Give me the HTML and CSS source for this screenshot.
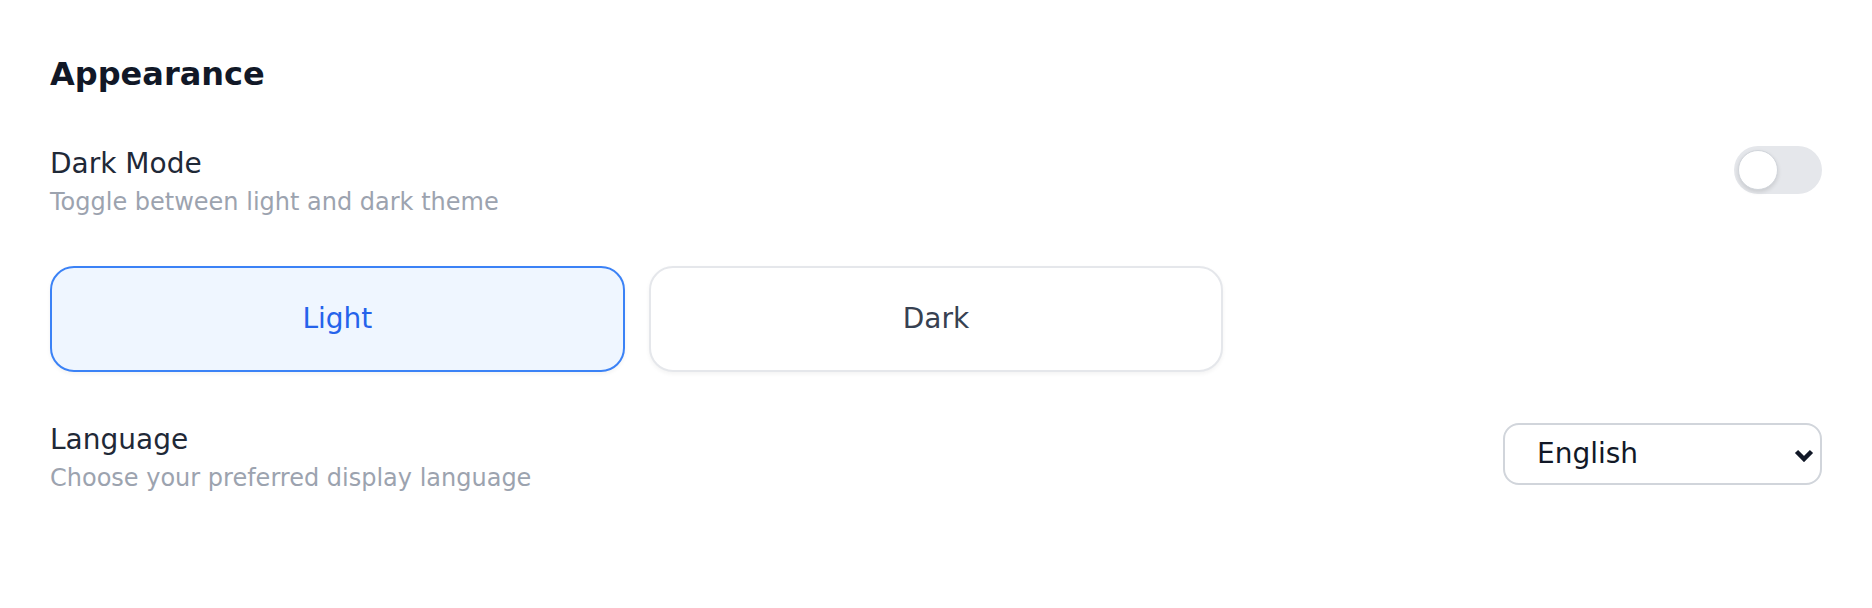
FILE: index.html
```html
<!DOCTYPE html>
<html lang="en">
<head>
<meta charset="utf-8">
<title>Appearance</title>
<link rel="stylesheet" href="styles.css">
</head>
<body>
<main class="panel">
  <h2 class="title">Appearance</h2>

  <div class="row">
    <div class="text">
      <div class="label">Dark Mode</div>
      <div class="desc">Toggle between light and dark theme</div>
    </div>
    <button class="toggle" type="button" aria-label="Dark mode"><span class="knob"></span></button>
  </div>

  <div class="themes">
    <button class="theme active" type="button">Light</button>
    <button class="theme" type="button">Dark</button>
  </div>

  <div class="row">
    <div class="text">
      <div class="label">Language</div>
      <div class="desc">Choose your preferred display language</div>
    </div>
    <div class="select">
      <span class="select-value">English</span>
      <svg class="chev" width="20" height="13" viewBox="0 0 20 13" aria-hidden="true">
        <path d="M2.5 2.5 L10 10 L17.5 2.5" fill="none" stroke="#111827" stroke-width="4.5"/>
      </svg>
    </div>
  </div>
</main>
</body>
</html>
```

FILE: styles.css
```css
* { box-sizing: border-box; }

html, body {
  margin: 0;
  padding: 0;
  background: #ffffff;
}

body {
  font-family: "DejaVu Sans", "Noto Sans", sans-serif;
  width: 1872px;
  height: 608px;
  overflow: hidden;
}

.panel {
  padding: 48px 50px 0 50px;
}

.title {
  margin: 0 0 44px 0;
  font-size: 32px;
  line-height: 52px;
  font-weight: 700;
  color: #111827;
}

.row {
  display: flex;
  justify-content: space-between;
  align-items: flex-start;
}

.text {
  display: flex;
  flex-direction: column;
}

.label {
  font-size: 28px;
  line-height: 40px;
  color: #1f2937;
}

.desc {
  margin-top: 2px;
  font-size: 24px;
  line-height: 32px;
  color: #9ca3af;
}

.toggle {
  margin-top: 2px;
  width: 88px;
  height: 48px;
  padding: 4px;
  border: none;
  border-radius: 24px;
  background: #e5e7eb;
  display: flex;
  align-items: center;
  cursor: pointer;
}

.knob {
  width: 40px;
  height: 40px;
  border-radius: 50%;
  background: #ffffff;
  border: 1px solid #d1d5db;
  box-shadow: 0 2px 4px rgba(0, 0, 0, 0.12);
}

.themes {
  display: grid;
  grid-template-columns: repeat(3, 1fr);
  gap: 24px;
  margin: 48px 0;
}

.theme {
  height: 106px;
  border: 2px solid #e5e7eb;
  border-radius: 24px;
  background: #ffffff;
  color: #374151;
  font-family: "DejaVu Sans", "Noto Sans", sans-serif;
  font-size: 28px;
  line-height: 40px;
  box-shadow: 0 2px 4px rgba(0, 0, 0, 0.05);
  cursor: pointer;
}

.theme.active {
  border-color: #3b82f6;
  background: #eff6ff;
  color: #2563eb;
}

.select {
  margin-top: 3px;
  width: 319px;
  height: 62px;
  border: 2px solid #d1d5db;
  border-radius: 16px;
  background: #ffffff;
  display: flex;
  align-items: center;
  justify-content: space-between;
  padding: 0 6px 0 32px;
}

.select-value {
  font-size: 28px;
  line-height: 40px;
  color: #111827;
}

.chev {
  display: block;
  margin-top: 2px;
}
```
